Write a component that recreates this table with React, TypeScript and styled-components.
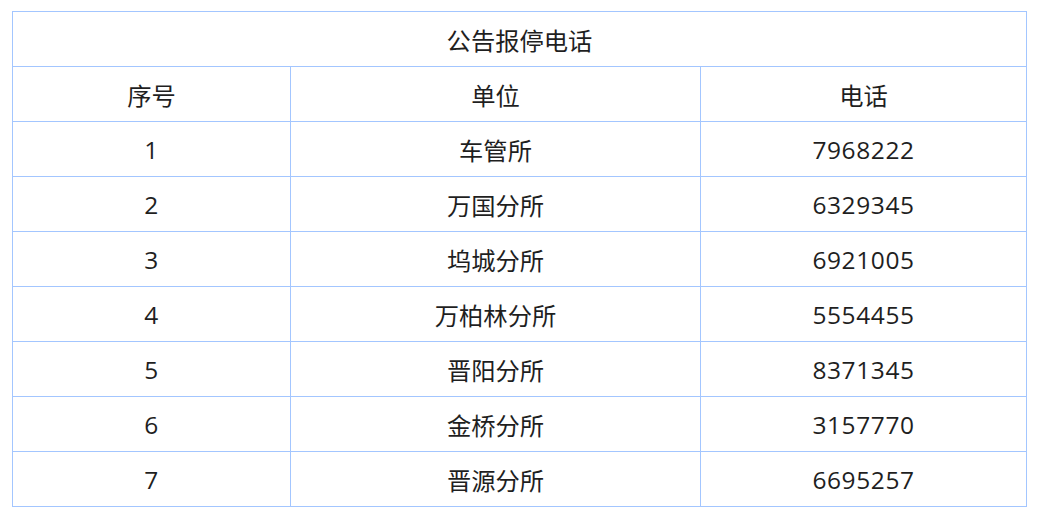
import React from "react";
import styled, { createGlobalStyle } from "styled-components";

const GlobalStyle = createGlobalStyle`
  body {
    margin: 0;
    background: #fff;
    font-family: "Open Sans", "Noto Sans CJK SC", sans-serif;
  }
`;

const rows = [
  { no: 1, unit: "车管所", phone: "7968222" },
  { no: 2, unit: "万国分所", phone: "6329345" },
  { no: 3, unit: "坞城分所", phone: "6921005" },
  { no: 4, unit: "万柏林分所", phone: "5554455" },
  { no: 5, unit: "晋阳分所", phone: "8371345" },
  { no: 6, unit: "金桥分所", phone: "3157770" },
  { no: 7, unit: "晋源分所", phone: "6695257" },
];

const App = () => {
  return (
    <Wrapper>
      <GlobalStyle />
      <Table>
        <colgroup>
          <col style={{ width: 278 }} />
          <col style={{ width: 410 }} />
          <col style={{ width: 326 }} />
        </colgroup>
        <thead>
          <tr>
            <Cell colSpan={3}>公告报停电话</Cell>
          </tr>
          <tr>
            <Cell>序号</Cell>
            <Cell>单位</Cell>
            <Cell>电话</Cell>
          </tr>
        </thead>
        <tbody>
          {rows.map((r) => (
            <tr key={r.no}>
              <Cell $digits>{r.no}</Cell>
              <Cell>{r.unit}</Cell>
              <Cell $digits>{r.phone}</Cell>
            </tr>
          ))}
        </tbody>
      </Table>
    </Wrapper>
  );
};

const Wrapper = styled.div`
  padding: 11px 0 0 12px;
`;
const Table = styled.table`
  width: 1015px;
  border-collapse: collapse;
  table-layout: fixed;
  border: 1px solid #a3c6ff;
`;
const Cell = styled.td<{ $digits?: boolean }>`
  height: 54px;
  padding: 0;
  border: 1px solid #a3c6ff;
  text-align: center;
  vertical-align: middle;
  font-size: ${(p) => (p.$digits ? "24.5px" : "24.3px")};
  letter-spacing: ${(p) => (p.$digits ? "0.6px" : "0")};
  color: #1f1f1f;
`;
export default App;
